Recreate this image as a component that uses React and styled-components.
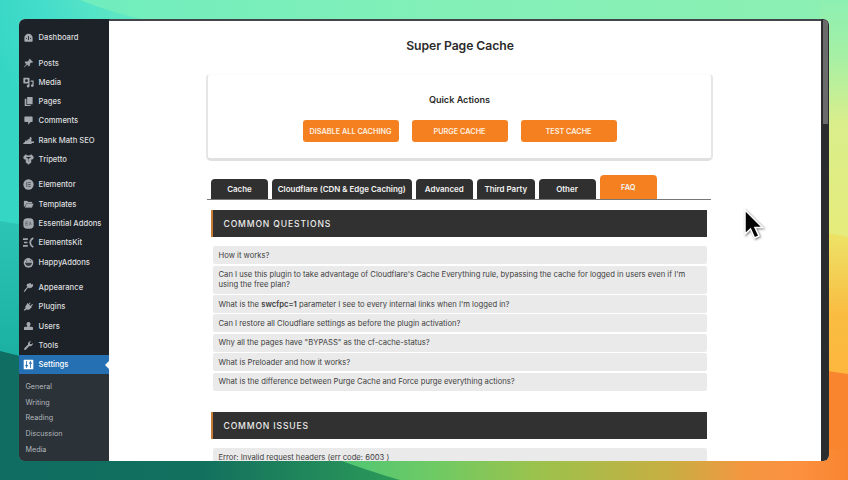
import React from "react";
import styled, { createGlobalStyle, css } from "styled-components";

const Global = createGlobalStyle`
  *, *::before, *::after { box-sizing: border-box; }
  html, body { margin: 0; padding: 0; overflow: hidden; }
  body { font-family: Inter, "Liberation Sans", sans-serif; }
`;

const Desktop = styled.div`
  position: relative;
  width: 848px;
  height: 480px;
  padding: 19px;
  overflow: hidden;
`;

const WallpaperSvg = styled.svg`
  position: absolute;
  inset: 0;
`;

const Window = styled.div`
  position: relative;
  display: flex;
  width: 810px;
  height: 442px;
  border-radius: 6px;
  overflow: hidden;
  background: #fff;
`;

const Sidebar = styled.nav`
  flex: none;
  width: 90px;
  height: 442px;
  padding-top: 9px;
  background: #1d2228;
`;

const MenuGroup = styled.div`
  display: flex;
  flex-direction: column;
  margin-bottom: 6.1px;
`;

const MenuItem = styled.a`
  position: relative;
  display: flex;
  align-items: center;
  gap: 4.6px;
  height: 19.3px;
  padding-left: 4px;
  font-size: 7.65px;
  font-weight: 500;
  white-space: nowrap;
  color: #dcdddf;
  ${(p) =>
    p.$active &&
    css`
      background: #2470b2;
      color: #fff;
      &::after {
        content: "";
        position: absolute;
        right: 0;
        top: 5.5px;
        border: 4px solid transparent;
        border-right-color: #fff;
        border-left-width: 0;
      }
    `}
`;

const MenuIcon = styled.svg`
  flex: none;
  width: 11px;
  height: 11px;
  color: ${(p) => (p.$active ? "#fff" : "#a4a9af")};
`;

const Submenu = styled.div`
  height: 100px;
  margin-top: -6.1px;
  padding-top: 4.1px;
  background: #2b3238;
`;

const SubItem = styled.a`
  display: flex;
  align-items: center;
  height: 15.8px;
  padding-left: 6.5px;
  font-size: 7.2px;
  color: #b4b8bc;
`;

const Page = styled.main`
  flex: 1;
  min-width: 0;
  display: flex;
  flex-direction: column;
  border-top: 2px solid #42454a;
  padding-left: 97px;
`;

const Title = styled.h1`
  flex: none;
  width: 508px;
  margin: 17px 0 0;
  font-size: 12.2px;
  line-height: 16px;
  font-weight: 600;
  letter-spacing: -0.05px;
  text-align: center;
  color: #2b2b2b;
`;

const ActionsCard = styled.section`
  flex: none;
  width: 507px;
  height: 88px;
  margin-top: 19px;
  padding-top: 18px;
  border: 2px solid #e6e6e6;
  border-top-color: #fdfdfd;
  border-bottom: 3px solid #e0e0e0;
  border-radius: 5px;
`;

const CardTitle = styled.h2`
  margin: 0 0 14px;
  font-size: 9.1px;
  line-height: 13px;
  font-weight: 600;
  text-align: center;
  color: #2b2b2b;
`;

const ButtonRow = styled.div`
  display: flex;
  justify-content: center;
  gap: 13px;
`;

const ActionButton = styled.button`
  width: 96px;
  height: 22px;
  padding: 0;
  border: 0;
  border-radius: 3px;
  background: #f58020;
  font-family: inherit;
  font-size: 7.3px;
  font-weight: 600;
  white-space: nowrap;
  color: #fff0e0;
`;

const Tabs = styled.div`
  flex: none;
  display: flex;
  align-items: flex-end;
  gap: 4px;
  width: 504px;
  height: 25px;
  margin: 14px 0 0 1px;
  padding-left: 4px;
  border-bottom: 1px solid #777;
`;

const Tab = styled.button`
  width: ${(p) => p.$w}px;
  height: ${(p) => (p.$active ? 24 : 20.5)}px;
  padding: 0;
  border: 0;
  border-radius: 4px 4px 0 0;
  background: ${(p) => (p.$active ? "#f58020" : "#303030")};
  font-family: inherit;
  font-size: ${(p) => (p.$active ? 7.4 : 7.95)}px;
  font-weight: 600;
  white-space: nowrap;
  color: #f4f4f4;
`;

const SectionHeader = styled.h3`
  flex: none;
  display: flex;
  align-items: center;
  width: 496px;
  height: 27px;
  margin: ${(p) => p.$top}px 0 9.4px 4.5px;
  padding-left: 11px;
  border-left: 2px solid #c97c34;
  background: #313131;
  font-size: 8.6px;
  font-weight: 500;
  letter-spacing: 0.84px;
  color: #ececec;
`;

const QuestionList = styled.div`
  display: flex;
  flex-direction: column;
  gap: 1.4px;
  width: 494px;
  margin-left: 6.5px;
`;

const Question = styled.div`
  flex: none;
  display: flex;
  align-items: center;
  height: ${(p) => (p.$tall ? 27.9 : 18)}px;
  padding: 1.2px 0 0 6px;
  border-radius: 2px;
  background: #eaeaea;
  font-size: 7.67px;
  line-height: 10.3px;
  white-space: nowrap;
  color: #404040;
  b { font-weight: 600; }
`;

const Scrollbar = styled.div`
  flex: none;
  width: 8px;
  padding: 1px 1px 0 2px;
  background: #2b2c2e;
`;

const ScrollThumb = styled.div`
  height: 104px;
  border-radius: 0 4px 0 0;
  background: #6b6b6b;
`;

const CursorSvg = styled.svg`
  position: absolute;
  left: 741px;
  top: 206px;
  filter: drop-shadow(1px 1.5px 1px rgba(0, 0, 0, 0.5));
`;

function Wallpaper() {
  return (
    <WallpaperSvg width="848" height="480" viewBox="0 0 848 480">
      <defs>
        <linearGradient id="top" x1="0" x2="1"><stop offset="0" stopColor="#6becbf" /><stop offset=".5" stopColor="#82f0b8" /><stop offset="1" stopColor="#8cf0b2" /></linearGradient>
        <linearGradient id="teal" gradientUnits="userSpaceOnUse" x1="0" x2="140" y1="60" y2="0"><stop offset="0" stopColor="#36d6c5" /><stop offset=".4" stopColor="#44ddcb" /><stop offset="1" stopColor="#66eac1" /></linearGradient>
        <linearGradient id="mid" x1="0" x2="0" y1="0" y2="1"><stop offset="0" stopColor="#2cc5b5" /><stop offset="1" stopColor="#19aea0" /></linearGradient>
        <linearGradient id="right" x1="0" x2="0" y1="0" y2="1"><stop offset="0" stopColor="#8cf0b2" /><stop offset=".15" stopColor="#a6f0a4" /><stop offset=".32" stopColor="#d9ee8c" /><stop offset=".6" stopColor="#e5ec7c" /><stop offset="1" stopColor="#e5ec7c" /></linearGradient>
        <linearGradient id="yellow" x1="0" x2="0" y1="0" y2="1"><stop offset="0" stopColor="#ece468" /><stop offset=".55" stopColor="#f9bd42" /><stop offset="1" stopColor="#fdb63e" /></linearGradient>
        <linearGradient id="bottom" gradientUnits="userSpaceOnUse" x1="330" x2="848" y1="0" y2="0"><stop offset="0" stopColor="#4cc677" /><stop offset=".2" stopColor="#6eca64" /><stop offset=".4" stopColor="#9bc24c" /><stop offset=".66" stopColor="#c9ae42" /><stop offset=".8" stopColor="#f39640" /><stop offset=".9" stopColor="#fb9140" /><stop offset="1" stopColor="#f9852f" /></linearGradient>
        <linearGradient id="dark" gradientUnits="userSpaceOnUse" x1="0" x2="400" y1="0" y2="0"><stop offset="0" stopColor="#0f6d62" /><stop offset=".5" stopColor="#12705e" /><stop offset="1" stopColor="#2c9a58" /></linearGradient>
      </defs>
      <rect width="848" height="240" fill="url(#top)" />
      <path d="M0 0H80Q110 12 145 20V230H0Z" fill="url(#teal)" />
      <path d="M0 221L30 226V370H0Z" fill="url(#mid)" />
      <rect x="820" width="28" height="380" fill="url(#right)" />
      <path d="M820 231L848 237V380H820Z" fill="url(#yellow)" />
      <path d="M820 370L848 374V480H820Z" fill="#f9852f" />
      <rect x="300" y="450" width="548" height="30" fill="url(#bottom)" />
      <path d="M0 351L24 357V450H320L342 461Q372 472 400 480H0Z" fill="url(#dark)" />
    </WallpaperSvg>
  );
}

const icons = {
  dashboard: <><path d="M8 2.500A6 6 0 0 0 2 8.500V13q0 1 1 1h10q1 0 1-1V8.500a6 6 0 0 0-6-6z" fill="currentColor" /><path d="M8 11.500V6M4.500 9.500h1.300M10.200 9.500h1.300" stroke="#1d2228" strokeWidth="1.300" /></>,
  posts: <path d="M10 1.500 14.500 6l-1.300.6-1.400-.1-2 2 .1 2.500-1.300 1L6 9.600 1.500 13.500 5 8.800 2.700 6.500l1-1.300 3 .1 2.200-2.200V2z" fill="currentColor" stroke="currentColor" strokeWidth=".5" />,
  media: <path d="M1.500 1h7q1 0 1 1v6.500q0 1-1 1h-7q-1 0-1-1V2q0-1 1-1zM5 3.300a2 2 0 1 0 0 4 2 2 0 0 0 0-4zM11 5h4.500v7.500a2 2 0 1 1-1.800-2V7H11zM7.500 9H9.500v4a2 2 0 1 1-2-1.800z" fill="currentColor" fillRule="evenodd" />,
  pages: <path d="M6 1.500h8V12H6zM2.500 4H5v9h6v1.500H2.500z" fill="currentColor" />,
  comments: <path d="M3 2h10q1 0 1 1v6q0 1-1 1h-2l-3.500 4V10H3Q2 10 2 9V3q0-1 1-1z" fill="currentColor" />,
  rank: <path d="M0 13 1.500 10.500H3V8h2.500v1.500L7 6h2l1.500-3.500 2.500 2-.8.800V9.500H16v2h-3.500V13z" fill="currentColor" />,
  tripetto: <path d="M3.500.5 7 1.800h2L12.500.5 16 4.500l-1.200 3.300-2.600.7v4L8 15.500l-4.200-3v-4l-2.600-.7L0 4.500zM4.500 4.500 8 7l3.500-2.500M8 7v4" fill="currentColor" stroke="#1d2228" strokeWidth=".5" />,
  elementor: <><circle cx="8" cy="8" r="7.500" fill="currentColor" /><path d="M5.500 4.500v7M7.500 5.200h3.500M7.500 8h3.500M7.500 10.800h3.500" stroke="#454b52" strokeWidth="1.300" /></>,
  templates: <path d="M1.500 3H6l1.300 1.500H13V6H5L3 10 1.500 11zM5.500 7H15l-2 5.500H3z" fill="currentColor" stroke="currentColor" strokeWidth=".4" />,
  essential: <><rect x=".5" y=".5" width="15" height="15" rx="5.500" fill="currentColor" /><path d="M4 5.500h3.500M4 8h3M4 10.500h3.500M4 5.500v5M9 10.500l1.500-5 1.500 5" stroke="#5b6168" strokeWidth="1" fill="none" /></>,
  elementskit: <path d="M0 3h7M1.500 8h5M0 13h7M15 1.500q-4.500 2.500-4.500 6.500t4.500 6.500" fill="none" stroke="currentColor" strokeWidth="2.400" />,
  happy: <><circle cx="8" cy="8.500" r="7" fill="currentColor" /><path d="M3 8.500h10q-.5 4.500-5 4.500T3 8.500z" fill="#343a40" /><path d="M4.500 5.500 6 6M10 5l1.500.5M10 .5l2 3" stroke="#1d2228" strokeWidth="1" fill="none" /></>,
  appearance: <path d="M6 3 11 1.500l1 2 2.500-.5v3l-3 3-1.300-1-1 1.500L7.500 8l-5 6L1 14l1-2 4.500-5L5 5.500z" fill="currentColor" />,
  plugins: <path d="m10 2 1 1-2 2.500 1.500 1.500L13.500 4.500l1 1L12 8l1 1-2 1.500Q8.500 14 5.500 12L2.500 14 1 13l2.500-2.500Q2.500 7 5.500 5l.5-2 2 1.500z" fill="currentColor" />,
  users: <path d="M8 1.500a3 3 0 0 1 1.800 5.400v1.300H13q1.500 0 1.500 1.500V13h-13V9.700Q1.500 8.200 3 8.200h3.200V6.900A3 3 0 0 1 8 1.500z" fill="currentColor" />,
  tools: <path d="M14.500 4.500a4 4 0 0 1-5.200 4.200L4 14q-1 .8-2 0t0-2l5.300-5.300A4 4 0 0 1 12 1.800L9.700 4l.5 1.800 2 .4z" fill="currentColor" />,
  settings: <><rect x="1" y="1" width="14" height="14" rx="1" fill="currentColor" /><path d="M5.200 3v10M10.800 3v10" stroke="#2470b2" strokeWidth="1.300" /><path d="M3.200 9.700h4M8.800 6h4" stroke="#2470b2" strokeWidth="2" /></>,
};

const menu = [
  [["dashboard", "Dashboard"]],
  [["posts", "Posts"], ["media", "Media"], ["pages", "Pages"], ["comments", "Comments"], ["rank", "Rank Math SEO"], ["tripetto", "Tripetto"]],
  [["elementor", "Elementor"], ["templates", "Templates"], ["essential", "Essential Addons"], ["elementskit", "ElementsKit"], ["happy", "HappyAddons"]],
  [["appearance", "Appearance"], ["plugins", "Plugins"], ["users", "Users"], ["tools", "Tools"], ["settings", "Settings"]],
];

const questions = [
  { text: "How it works?" },
  { text: <>Can I use this plugin to take advantage of Cloudflare's Cache Everything rule, bypassing the cache for logged in users even if I'm<br />using the free plan?</>, tall: true },
  { text: <>What is the <b>swcfpc=1</b> parameter I see to every internal links when I'm logged in?</> },
  { text: "Can I restore all Cloudflare settings as before the plugin activation?" },
  { text: 'Why all the pages have "BYPASS" as the cf-cache-status?' },
  { text: "What is Preloader and how it works?" },
  { text: "What is the difference between Purge Cache and Force purge everything actions?" },
];

export default function App() {
  return (
    <Desktop>
      <Global />
      <Wallpaper />
      <Window>
        <Sidebar>
          {menu.map((group, i) => (
            <MenuGroup key={i}>
              {group.map(([icon, label]) => (
                <MenuItem key={label} $active={icon === "settings"}>
                  <MenuIcon viewBox="0 0 16 16" $active={icon === "settings"}>{icons[icon]}</MenuIcon>
                  <span>{label}</span>
                </MenuItem>
              ))}
            </MenuGroup>
          ))}
          <Submenu>
            {["General", "Writing", "Reading", "Discussion", "Media"].map((s) => (
              <SubItem key={s}>{s}</SubItem>
            ))}
          </Submenu>
        </Sidebar>
        <Page>
          <Title>Super Page Cache</Title>
          <ActionsCard>
            <CardTitle>Quick Actions</CardTitle>
            <ButtonRow>
              <ActionButton>DISABLE ALL CACHING</ActionButton>
              <ActionButton>PURGE CACHE</ActionButton>
              <ActionButton>TEST CACHE</ActionButton>
            </ButtonRow>
          </ActionsCard>
          <Tabs>
            <Tab $w={57}>Cache</Tab>
            <Tab $w={139.5}>Cloudflare (CDN &amp; Edge Caching)</Tab>
            <Tab $w={57.5}>Advanced</Tab>
            <Tab $w={57.5}>Third Party</Tab>
            <Tab $w={57}>Other</Tab>
            <Tab $w={57.5} $active>FAQ</Tab>
          </Tabs>
          <SectionHeader $top={10}>COMMON QUESTIONS</SectionHeader>
          <QuestionList>
            {questions.map((q, i) => (
              <Question key={i} $tall={q.tall}><span>{q.text}</span></Question>
            ))}
          </QuestionList>
          <SectionHeader $top={21.4}>COMMON ISSUES</SectionHeader>
          <QuestionList>
            <Question><span>Error: Invalid request headers (err code: 6003 )</span></Question>
          </QuestionList>
        </Page>
        <Scrollbar><ScrollThumb /></Scrollbar>
      </Window>
      <CursorSvg width="24" height="36" viewBox="0 0 24 36">
        <path d="M4 4V28L9.500 23L13.500 32L18 30L14 21.500H21.500Z" fill="#050505" stroke="#fff" strokeWidth="1.500" />
      </CursorSvg>
    </Desktop>
  );
}
